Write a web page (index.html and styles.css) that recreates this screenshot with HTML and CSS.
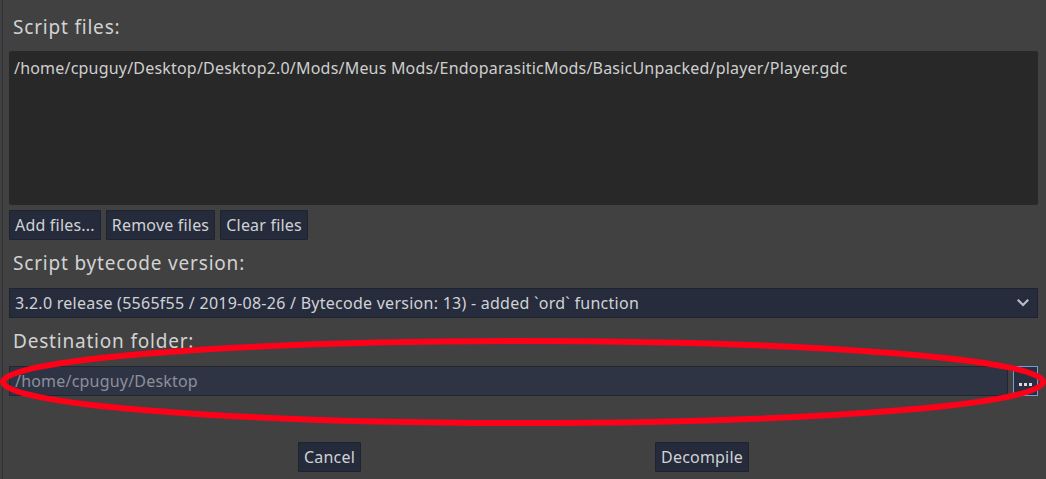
FILE: index.html
```html
<!DOCTYPE html>
<html>
<head>
<meta charset="utf-8">
<link rel="stylesheet" href="styles.css">
</head>
<body>
<div class="frame">
  <div class="panel">
    <div class="label first">Script files:</div>
    <div class="filelist">
      <div class="fileitem">/home/cpuguy/Desktop/Desktop2.0/Mods/Meus Mods/EndoparasiticMods/BasicUnpacked/player/Player.gdc</div>
    </div>
    <div class="btnrow">
      <button class="btn">Add files...</button>
      <button class="btn">Remove files</button>
      <button class="btn">Clear files</button>
    </div>
    <div class="label">Script bytecode version:</div>
    <div class="select">
      <span class="select-text">3.2.0 release (5565f55 / 2019-08-26 / Bytecode version: 13) - added `ord` function</span>
      <svg class="chev" width="12" height="8" viewBox="0 0 12 8"><path d="M1.5 1.5 L6 6 L10.5 1.5" fill="none" stroke="#b9bcc4" stroke-width="2.2" stroke-linecap="square"/></svg>
    </div>
    <div class="label">Destination folder:</div>
    <div class="destrow">
      <div class="input">/home/cpuguy/Desktop</div>
      <button class="browse"><svg width="13" height="3" viewBox="0 0 13 3"><rect x="0" y="0" width="3" height="3" fill="#d8dae0"/><rect x="5" y="0" width="3" height="3" fill="#d8dae0"/><rect x="10" y="0" width="3" height="3" fill="#d8dae0"/></svg></button>
    </div>
    <div class="footer">
      <button class="btn">Cancel</button>
      <button class="btn">Decompile</button>
    </div>
  </div>
  <svg class="annot" width="1046" height="479" viewBox="0 0 1046 479">
    <ellipse cx="523" cy="382" rx="520" ry="41" fill="none" stroke="#ff0019" stroke-width="6"/>
  </svg>
</div>
</body>
</html>
```
FILE: styles.css
```css
html, body {
  margin: 0;
  padding: 0;
  background: #414141;
  width: 1046px;
  height: 479px;
  overflow: hidden;
}
.frame {
  position: relative;
  width: 1046px;
  height: 479px;
  font-family: "Noto Sans", "Open Sans", sans-serif;
}
.panel {
  margin-left: 2px;
  border-left: 1px solid #2d3038;
  height: 479px;
  box-sizing: border-box;
  padding: 0 8px 0 6px;
  display: flex;
  flex-direction: column;
}
.label {
  color: #d2d2d2;
  font-size: 19px;
  letter-spacing: 0.8px;
  line-height: 24px;
  padding-left: 4px;
  margin-top: 11px;
  margin-bottom: 13px;
}
.label.first {
  margin-top: 15px;
  margin-bottom: 12px;
}
.filelist {
  background: #282828;
  height: 154px;
  border-radius: 2px;
  box-sizing: border-box;
  padding: 7px 5px;
}
.fileitem {
  color: #cfcfcf;
  font-size: 16px;
  letter-spacing: 0.2px;
  line-height: 20px;
}
.btnrow {
  display: flex;
  gap: 5px;
  margin-top: 5px;
}
.btn {
  font-family: "Noto Sans", "Open Sans", sans-serif;
  font-size: 16px;
  letter-spacing: 0.2px;
  color: #d0d2d6;
  background: #252b3b;
  border: 1px solid #1e2330;
  height: 30px;
  padding: 0 5px;
  margin: 0;
  border-radius: 1px;
}
.select {
  height: 30px;
  background: #262c3c;
  border: 1px solid #1f2330;
  box-sizing: border-box;
  display: flex;
  align-items: center;
  padding: 0 5px;
  font-size: 16px;
  letter-spacing: 0.26px;
  color: #d0d2d6;
}
.select-text {
  flex: 1;
}
.chev {
  margin-right: 3px;
}
.destrow {
  display: flex;
  gap: 5px;
  height: 30px;
}
.input {
  flex: 1;
  background: #2f3445;
  border: 1px solid #22262f;
  box-sizing: border-box;
  color: #8b909b;
  font-size: 16px;
  letter-spacing: 0.2px;
  line-height: 28px;
  padding: 0 5px;
}
.browse {
  width: 25px;
  height: 30px;
  box-sizing: border-box;
  background: #2a3040;
  border: 1px solid #6c9ee6;
  padding: 6px 0 0 0;
  margin: 0;
  display: flex;
  align-items: center;
  justify-content: center;
}
.footer {
  display: flex;
  justify-content: center;
  gap: 294px;
  margin-top: 46px;
}
.annot {
  position: absolute;
  left: 0;
  top: 0;
  pointer-events: none;
}
```
